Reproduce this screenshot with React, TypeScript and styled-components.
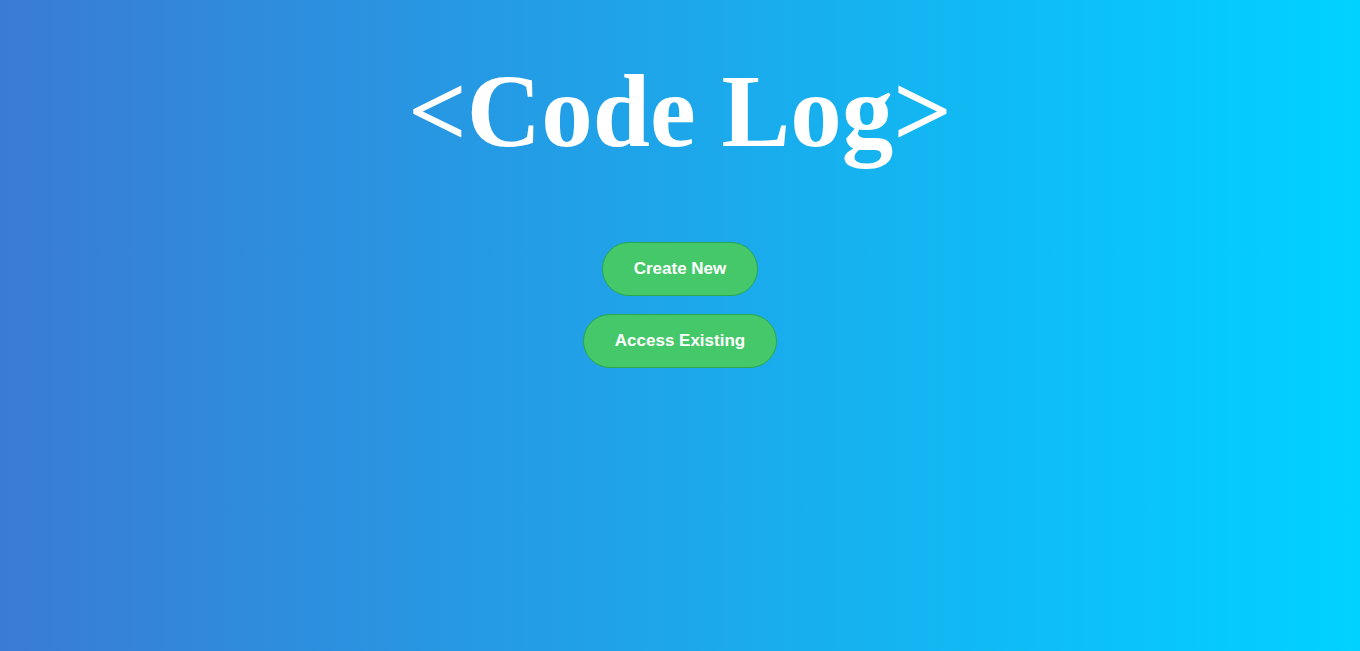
import React from "react";
import styled, { createGlobalStyle } from "styled-components";

const Global = createGlobalStyle`
  html, body { margin: 0; padding: 0; height: 100%; }
  body { font-family: "Liberation Sans", Arial, sans-serif; }
  #root { min-height: 100vh; }
`;

const Page = styled.div`
  min-height: 100vh;
  background: linear-gradient(to right, #3a7bd5, #00d2ff);
  display: flex;
  flex-direction: column;
  align-items: center;
`;

const Title = styled.h1`
  margin: 51px 0 0;
  font-family: "Liberation Serif", "Times New Roman", serif;
  font-weight: bold;
  font-size: 103px;
  line-height: 120px;
  color: #ffffff;
`;

const Actions = styled.div`
  margin-top: 71px;
  display: flex;
  flex-direction: column;
  align-items: center;
  gap: 18px;
`;

const PillButton = styled.button`
  font-family: "Liberation Sans", Arial, sans-serif;
  font-weight: bold;
  font-size: 17px;
  line-height: 20px;
  color: #ffffff;
  background: #45c869;
  border: 1px solid #2aa84a;
  border-radius: 30px;
  padding: 16px 31px;
  cursor: pointer;
`;

export default function App() {
  return (
    <>
      <Global />
      <Page>
        <Title>&lt;Code Log&gt;</Title>
        <Actions>
          <PillButton>Create New</PillButton>
          <PillButton>Access Existing</PillButton>
        </Actions>
      </Page>
    </>
  );
}
